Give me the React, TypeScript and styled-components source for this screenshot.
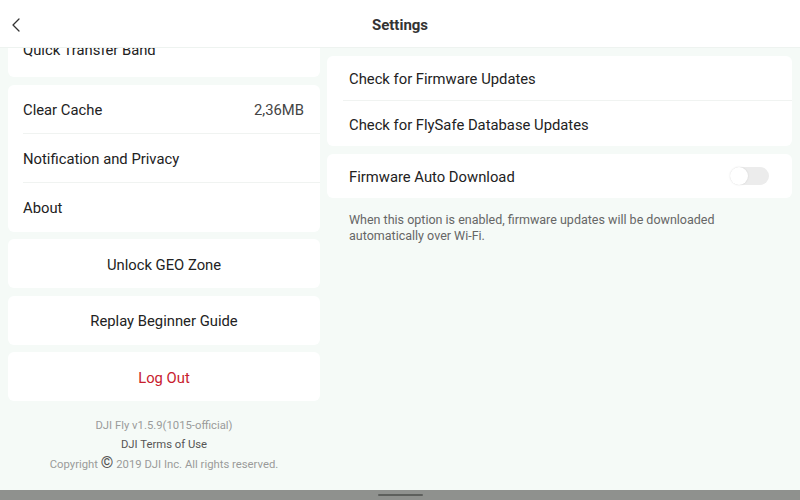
import { useLayoutEffect, useRef } from "react";
import styled, { createGlobalStyle } from "styled-components";

const Global = createGlobalStyle`
  html, body {
    margin: 0;
    padding: 0;
    width: 800px;
    height: 500px;
    overflow: hidden;
    font-family: Roboto, "Noto Sans", Arial, sans-serif;
    background-color: #f5faf7;
  }
`;

export default function App() {
  const scrollRef = useRef<HTMLDivElement>(null);

  // the left list is scrolled down a little in the screenshot
  useLayoutEffect(() => {
    if (scrollRef.current) scrollRef.current.scrollTop = 27;
  }, []);

  return (
    <Page>
      <Global />
      <Header>
        <BackButton aria-label="Back">
          <svg width="10" height="14" viewBox="0 0 10 14">
            <polyline
              points="8,1 2,7 8,13"
              fill="none"
              stroke="#333"
              strokeWidth="1.3"
              strokeLinejoin="round"
              strokeLinecap="round"
            />
          </svg>
        </BackButton>
        <Title>Settings</Title>
      </Header>

      <Body>
        <LeftColumn ref={scrollRef}>
          <Card>
            <Row tall>
              <Label>Quick Transfer Band</Label>
            </Row>
          </Card>
          <Card>
            <Row divider>
              <Label>Clear Cache</Label>
              <Value>2,36MB</Value>
            </Row>
            <Row divider>
              <Label>Notification and Privacy</Label>
            </Row>
            <Row>
              <Label>About</Label>
            </Row>
          </Card>
          <Card>
            <CenterRow>Unlock GEO Zone</CenterRow>
          </Card>
          <Card>
            <CenterRow>Replay Beginner Guide</CenterRow>
          </Card>
          <Card>
            <CenterRow danger>Log Out</CenterRow>
          </Card>

          <Footer>
            <FootLine>DJI Fly v1.5.9(1015-official)</FootLine>
            <FootLine dark>DJI Terms of Use</FootLine>
            <FootLine>
              Copyright <CopyMark>©</CopyMark> 2019 DJI Inc. All rights reserved.
            </FootLine>
          </Footer>
        </LeftColumn>

        <RightColumn>
          <Card>
            <WideRow divider>
              <Label>Check for Firmware Updates</Label>
            </WideRow>
            <WideRow>
              <Label>Check for FlySafe Database Updates</Label>
            </WideRow>
          </Card>
          <Card>
            <WideRow short>
              <Label>Firmware Auto Download</Label>
              <Toggle>
                <Knob />
              </Toggle>
            </WideRow>
          </Card>
          <Hint>
            When this option is enabled, firmware updates will be downloaded
            <br />
            automatically over Wi-Fi.
          </Hint>
        </RightColumn>
      </Body>

      <NavBar>
        <NavHandle />
      </NavBar>
    </Page>
  );
}

const Page = styled.div`
  width: 800px;
  height: 500px;
  display: flex;
  flex-direction: column;
  background-color: #f5faf7;
`;

const Header = styled.div`
  height: 48px;
  flex-shrink: 0;
  display: flex;
  align-items: center;
  justify-content: center;
  position: relative;
  background-color: #ffffff;
  border-bottom: 1px solid #eef3f0;
  box-sizing: border-box;
`;

const BackButton = styled.div`
  position: absolute;
  left: 11px;
  top: 17px;
  width: 12px;
  height: 16px;
  display: flex;
  align-items: center;
`;

const Title = styled.div`
  font-size: 15px;
  font-weight: 700;
  color: #333333;
  margin-top: 2px;
`;

const Body = styled.div`
  flex: 1;
  min-height: 0;
  display: flex;
  gap: 7px;
  padding: 0 8px;
`;

const LeftColumn = styled.div`
  width: 312px;
  flex-shrink: 0;
  display: flex;
  flex-direction: column;
  gap: 7.5px;
  overflow-y: auto;
  scrollbar-width: none;

  &::-webkit-scrollbar {
    display: none;
  }
`;

const RightColumn = styled.div`
  flex: 1;
  display: flex;
  flex-direction: column;
  gap: 8px;
  padding-top: 8px;
`;

const Card = styled.div`
  flex-shrink: 0;
  background-color: #ffffff;
  border-radius: 6px;
  overflow: hidden;
`;

const Row = styled.div<{ divider?: boolean; tall?: boolean }>`
  height: ${(p) => (p.tall ? "56px" : "49px")};
  margin-left: 15px;
  padding: 2px 16px 0 0;
  display: flex;
  align-items: center;
  justify-content: space-between;
  box-sizing: border-box;
  border-bottom: ${(p) => (p.divider ? "1px solid #f0f3f1" : "none")};
`;

const Label = styled.span`
  font-size: 14.8px;
  color: #222222;
`;

const Value = styled.span`
  font-size: 14.8px;
  color: #444444;
`;

const CenterRow = styled.div<{ danger?: boolean }>`
  height: 49px;
  padding-top: 2px;
  box-sizing: border-box;
  display: flex;
  align-items: center;
  justify-content: center;
  font-size: 14.8px;
  color: ${(p) => (p.danger ? "#c8202d" : "#222222")};
`;

const WideRow = styled.div<{ divider?: boolean; short?: boolean }>`
  height: ${(p) => (p.short ? "44px" : "45px")};
  margin-left: 16px;
  padding: 2px 23px 0 6px;
  display: flex;
  align-items: center;
  justify-content: space-between;
  box-sizing: border-box;
  border-bottom: ${(p) => (p.divider ? "1px solid #f0f3f1" : "none")};
`;

const Toggle = styled.div`
  width: 39px;
  height: 18px;
  margin-top: -2px;
  border-radius: 9px;
  background-color: #ececec;
  position: relative;
`;

const Knob = styled.div`
  position: absolute;
  left: 0;
  top: 0;
  width: 18px;
  height: 18px;
  border-radius: 50%;
  background-color: #ffffff;
  box-shadow: 0 0 2px rgba(0, 0, 0, 0.12);
`;

const Hint = styled.div`
  padding: 6px 22px 0;
  font-size: 12.5px;
  line-height: 16px;
  color: #666666;
`;

const Footer = styled.div`
  flex-shrink: 0;
  display: flex;
  flex-direction: column;
  align-items: center;
  padding: 7px 0 20px;
`;

const FootLine = styled.div<{ dark?: boolean }>`
  font-size: 11.3px;
  line-height: 19.5px;
  color: ${(p) => (p.dark ? "#555555" : "#9a9a9a")};
`;

const CopyMark = styled.span`
  font-size: 16px;
  line-height: 14px;
  font-weight: 700;
  color: #555555;
`;

const NavBar = styled.div`
  height: 10px;
  flex-shrink: 0;
  background-color: #8f918e;
  display: flex;
  justify-content: center;
  align-items: center;
`;

const NavHandle = styled.div`
  width: 45px;
  height: 2px;
  border-radius: 1px;
  background-color: #5d5f5c;
`;
